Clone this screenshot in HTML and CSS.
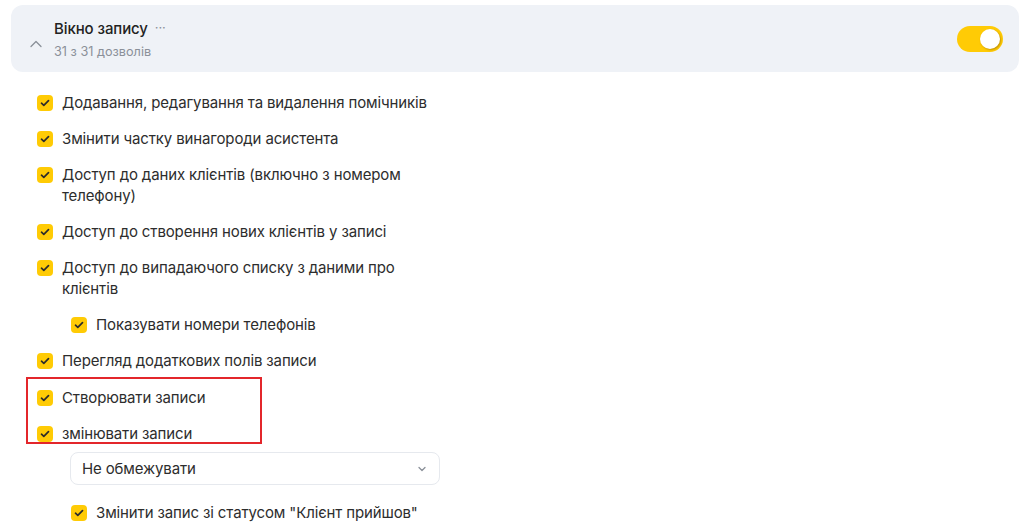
FILE: index.html
```html
<!DOCTYPE html>
<html lang="uk">
<head>
<meta charset="utf-8">
<link rel="stylesheet" href="styles.css">
</head>
<body>
<div class="page">
  <div class="card">
    <svg class="chev-up" width="12" height="8" viewBox="0 0 12 8"><path d="M1 6.5 L6 1.5 L11 6.5" fill="none" stroke="#8a9099" stroke-width="1.3" stroke-linecap="round" stroke-linejoin="round"/></svg>
    <div class="card-text">
      <div class="title">Вікно запису <span class="dots">···</span></div>
      <div class="sub">31 з 31 дозволів</div>
    </div>
    <div class="toggle"><span class="knob"></span></div>
  </div>

  <div class="list">
    <div class="row"><span class="cb"><svg width="10" height="8" viewBox="0 0 10 8"><path d="M1.5 4.2 L3.8 6.3 L8.5 1.7" fill="none" stroke="#2b2b2b" stroke-width="1.7" stroke-linecap="round" stroke-linejoin="round"/></svg></span><span class="label">Додавання, редагування та видалення помічників</span></div>
    <div class="row"><span class="cb"><svg width="10" height="8" viewBox="0 0 10 8"><path d="M1.5 4.2 L3.8 6.3 L8.5 1.7" fill="none" stroke="#2b2b2b" stroke-width="1.7" stroke-linecap="round" stroke-linejoin="round"/></svg></span><span class="label">Змінити частку винагороди асистента</span></div>
    <div class="row"><span class="cb"><svg width="10" height="8" viewBox="0 0 10 8"><path d="M1.5 4.2 L3.8 6.3 L8.5 1.7" fill="none" stroke="#2b2b2b" stroke-width="1.7" stroke-linecap="round" stroke-linejoin="round"/></svg></span><span class="label">Доступ до даних клієнтів (включно з номером телефону)</span></div>
    <div class="row"><span class="cb"><svg width="10" height="8" viewBox="0 0 10 8"><path d="M1.5 4.2 L3.8 6.3 L8.5 1.7" fill="none" stroke="#2b2b2b" stroke-width="1.7" stroke-linecap="round" stroke-linejoin="round"/></svg></span><span class="label">Доступ до створення нових клієнтів у записі</span></div>
    <div class="row"><span class="cb"><svg width="10" height="8" viewBox="0 0 10 8"><path d="M1.5 4.2 L3.8 6.3 L8.5 1.7" fill="none" stroke="#2b2b2b" stroke-width="1.7" stroke-linecap="round" stroke-linejoin="round"/></svg></span><span class="label">Доступ до випадаючого списку з даними про клієнтів</span></div>
    <div class="row sub-row"><span class="cb"><svg width="10" height="8" viewBox="0 0 10 8"><path d="M1.5 4.2 L3.8 6.3 L8.5 1.7" fill="none" stroke="#2b2b2b" stroke-width="1.7" stroke-linecap="round" stroke-linejoin="round"/></svg></span><span class="label">Показувати номери телефонів</span></div>
    <div class="row"><span class="cb"><svg width="10" height="8" viewBox="0 0 10 8"><path d="M1.5 4.2 L3.8 6.3 L8.5 1.7" fill="none" stroke="#2b2b2b" stroke-width="1.7" stroke-linecap="round" stroke-linejoin="round"/></svg></span><span class="label">Перегляд додаткових полів записи</span></div>
    <div class="highlight-wrap">
      <div class="row"><span class="cb"><svg width="10" height="8" viewBox="0 0 10 8"><path d="M1.5 4.2 L3.8 6.3 L8.5 1.7" fill="none" stroke="#2b2b2b" stroke-width="1.7" stroke-linecap="round" stroke-linejoin="round"/></svg></span><span class="label">Створювати записи</span></div>
      <div class="row"><span class="cb"><svg width="10" height="8" viewBox="0 0 10 8"><path d="M1.5 4.2 L3.8 6.3 L8.5 1.7" fill="none" stroke="#2b2b2b" stroke-width="1.7" stroke-linecap="round" stroke-linejoin="round"/></svg></span><span class="label">змінювати записи</span></div>
      <div class="highlight"></div>
    </div>
    <div class="select">
      <span>Не обмежувати</span>
      <svg width="10" height="6" viewBox="0 0 10 6"><path d="M2 1.5 L5 4.5 L8 1.5" fill="none" stroke="#8a9099" stroke-width="1.3" stroke-linecap="round" stroke-linejoin="round"/></svg>
    </div>
    <div class="row sub-row last"><span class="cb"><svg width="10" height="8" viewBox="0 0 10 8"><path d="M1.5 4.2 L3.8 6.3 L8.5 1.7" fill="none" stroke="#2b2b2b" stroke-width="1.7" stroke-linecap="round" stroke-linejoin="round"/></svg></span><span class="label">Змінити запис зі статусом "Клієнт прийшов"</span></div>
  </div>
</div>
</body>
</html>
```

FILE: styles.css
```css
* { box-sizing: border-box; }
html, body { margin: 0; padding: 0; background: #fff; }
body {
  font-family: Inter, "Noto Sans", "Liberation Sans", sans-serif;
  color: #2a2a2a;
  overflow: hidden;
}
.page {
  padding: 5px 5px 0 11px;
}
.card {
  height: 67px;
  background: #eff2f7;
  border-radius: 12px;
  display: flex;
  align-items: center;
  padding: 0 16px 0 19px;
}
.chev-up {
  margin-top: 10px;
  flex: none;
}
.card-text {
  margin-left: 12px;
  padding-top: 2px;
  flex: 1;
  display: flex;
  flex-direction: column;
  gap: 5px;
}
.title {
  font-size: 15px;
  font-weight: 500;
  line-height: 20px;
  color: #222;
  letter-spacing: -0.1px;
}
.dots {
  color: #8a9099;
  font-weight: 400;
  font-size: 13px;
  margin-left: 3px;
  position: relative;
  top: -2px;
}
.sub {
  font-size: 12.7px;
  line-height: 16px;
  color: #8b9099;
}
.toggle {
  width: 46px;
  height: 26px;
  border-radius: 13px;
  background: #ffcb05;
  display: flex;
  align-items: center;
  justify-content: flex-end;
  padding-right: 3px;
}
.knob {
  width: 20px;
  height: 20px;
  border-radius: 50%;
  background: #fff;
  box-shadow: 1px 1px 2px rgba(120, 80, 0, 0.45);
}
.list {
  width: 429px;
  margin-top: 20px;
  display: flex;
  flex-direction: column;
  gap: 15px;
}
.highlight-wrap {
  position: relative;
  margin-top: 1px;
  display: flex;
  flex-direction: column;
  gap: 15px;
}
.highlight {
  position: absolute;
  left: 15px;
  top: -10px;
  width: 236px;
  height: 67px;
  border: 2px solid #e3262b;
  pointer-events: none;
}
.row {
  display: flex;
  align-items: flex-start;
  padding-left: 26px;
  font-size: 15px;
  line-height: 21px;
  letter-spacing: -0.13px;
  color: #2d2d2d;
}
.sub-row {
  padding-left: 60px;
}
.row.last {
  margin-top: 2px;
}
.cb {
  flex: none;
  width: 16px;
  height: 16px;
  margin-top: 2.5px;
  border-radius: 4px;
  background: #ffcb05;
  display: flex;
  align-items: center;
  justify-content: center;
  margin-right: 9px;
}
.cb svg { display: block; }
.label { flex: 1; }
.select {
  margin-left: 59px;
  margin-top: -7px;
  height: 33px;
  width: 370px;
  border: 1px solid #e6e9ee;
  border-radius: 8px;
  display: flex;
  align-items: center;
  justify-content: space-between;
  padding: 0 12px 0 11px;
  font-size: 15px;
  letter-spacing: -0.13px;
  color: #2d2d2d;
}
```
